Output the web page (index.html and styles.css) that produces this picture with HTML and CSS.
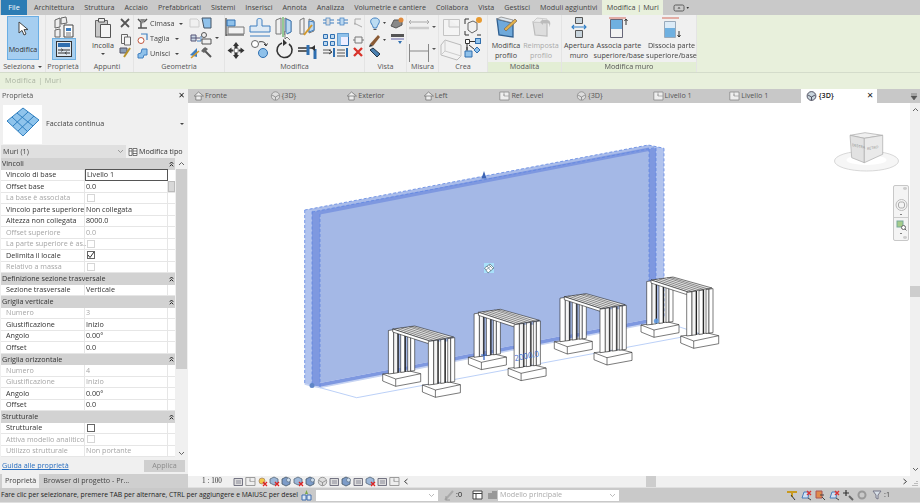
FILE: index.html
```html
<!DOCTYPE html>
<html lang="it">
<head>
<meta charset="utf-8">
<title>Modifica | Muri</title>
<link rel="stylesheet" href="styles.css">
</head>
<body>
<svg class="defs" aria-hidden="true">
  <symbol id="col" viewBox="0 0 5 6"><path d="M.8 2.800 2.500 1 4.200 2.800M.8 5.300 2.500 3.500 4.200 5.300" fill="none" stroke="#222" stroke-width="1"/></symbol>
  <symbol id="home" viewBox="0 0 11 10"><path d="M5.500 1 10.500 5H1.200ZM2.800 5V9H8.200V5" fill="#eee" stroke="#777" stroke-width=".8"/></symbol>
  <symbol id="cube3d" viewBox="0 0 11 10"><circle cx="5.500" cy="5" r="4.200" fill="#ddd" stroke="#888" stroke-width=".8"/><path d="M2 4 5.500 6 9 4M5.500 6V9" fill="none" stroke="#777" stroke-width=".7"/></symbol>
  <symbol id="cube3da" viewBox="0 0 11 10"><circle cx="5.500" cy="5" r="4.400" fill="#c8d4dc" stroke="#445" stroke-width=".9"/><path d="M2 4 5.500 6 9 4M5.500 6V9.400" fill="none" stroke="#334" stroke-width=".8"/></symbol>
  <symbol id="plan" viewBox="0 0 11 10"><path d="M.8 1H10V9H.8Z" fill="#eee" stroke="#888" stroke-width=".8"/><path d="M5 1V5H10M5 5V3" fill="none" stroke="#999" stroke-width=".7"/></symbol>
  <symbol id="vc" viewBox="0 0 11 11"><path d="M1 2.500H9.500V9.500H1Z" fill="#ddd" stroke="#667" stroke-width=".9"/><path d="M3 5H8M3 7H8" stroke="#778" stroke-width=".8"/></symbol>
  <symbol id="vcx" viewBox="0 0 11 11"><path d="M1 3 5 1 9 3V7L5 9 1 7Z" fill="#9db7d8" stroke="#567" stroke-width=".8"/><path d="M6 6 10 10M10 6 6 10" stroke="#d22" stroke-width="1.300"/></symbol>
  <symbol id="vcy" viewBox="0 0 11 11"><circle cx="5" cy="5" r="3" fill="#f2c94c" stroke="#a86" stroke-width=".8"/><path d="M6 6 10 10M10 6 6 10" stroke="#d22" stroke-width="1.300"/></symbol>
  <symbol id="vcb" viewBox="0 0 11 11"><path d="M1 3 5 1 9 3V8L5 10 1 8Z" fill="#7d9cc8" stroke="#456" stroke-width=".8"/><circle cx="7.500" cy="4" r="2" fill="#cde" stroke="#567" stroke-width=".6"/></symbol>
  <symbol id="sf" viewBox="0 0 12 12"><path d="M2 9 4 3H9L8 9Z" fill="#cfe0f3" stroke="#3f74b5" stroke-width=".9"/><path d="M7 2 11 6M11 2 7 6" stroke="#d33" stroke-width="1.400"/><path d="M8 9 11 11" stroke="#444"/></symbol>
</svg>

<header class="menubar">
  <span class="file">File</span>
  <span class="tab">Architettura</span>
  <span class="tab">Struttura</span>
  <span class="tab">Acciaio</span>
  <span class="tab">Prefabbricati</span>
  <span class="tab">Sistemi</span>
  <span class="tab">Inserisci</span>
  <span class="tab">Annota</span>
  <span class="tab">Analizza</span>
  <span class="tab">Volumetrie e cantiere</span>
  <span class="tab">Collabora</span>
  <span class="tab">Vista</span>
  <span class="tab">Gestisci</span>
  <span class="tab">Moduli aggiuntivi</span>
  <span class="tab tab-active">Modifica | Muri</span>
  <svg class="tab-extra" width="20" height="10" viewBox="0 0 20 10"><rect x="1" y="2" width="10" height="6" rx="1.500" fill="none" stroke="#444" stroke-width=".8"/><path d="M4.500 5.500 6 4 7.500 5.500Z" fill="#444"/><path d="M13.500 4H16L14.700 6Z" fill="#333"/></svg>
</header>

<section class="ribbon">
  <div class="panel p-sel">
    <div class="pbody">
      <div class="modbtn">
        <svg width="12" height="16" viewBox="0 0 12 16"><path d="M2 1V12L5 9.400 7 14 9 13 7 8.600H11Z" fill="#fff" stroke="#444" stroke-width="1"/></svg>
        <span>Modifica</span>
      </div>
    </div>
    <div class="plabel">Seleziona <i class="caret"></i></div>
  </div>

  <div class="panel p-prop">
    <div class="pbody">
      <svg width="35" height="47" viewBox="0 0 35 47">
        <path d="M9 5 14 3V12L9 13ZM15 3 20 2 21 8 15 9ZM9 15 14 14V22H9Z" fill="#eee" stroke="#666"/>
        <path d="M18 10H27V22H18Z" fill="#fff" stroke="#444"/><path d="M20 13H25V16H20Z" fill="#3f7fc0"/><path d="M20 18H25M20 20H25" stroke="#555" stroke-width=".8"/>
        <rect x="6.500" y="23.500" width="23" height="21" fill="#a8d0f0" stroke="#6fb0e0"/>
        <rect x="10.500" y="26.500" width="15" height="15" fill="#dfe8f0" stroke="#333"/>
        <rect x="12" y="28" width="12" height="4" fill="#2f6fb0"/>
        <path d="M12 35H24M12 38H24" stroke="#333"/><path d="M15 33.500 17 35 15 36.500M21 36.500 19 38 21 39.500" fill="none" stroke="#333" stroke-width=".7"/>
      </svg>
    </div>
    <div class="plabel">Proprietà</div>
  </div>

  <div class="panel p-app">
    <div class="pbody app-body">
      <div class="paste">
        <svg width="18" height="21" viewBox="0 0 18 21"><path d="M1.500 3.500H13.500V20H1.500Z" fill="#c7c7c7" stroke="#666"/><path d="M4.500 1.500H10.500V5H4.500Z" fill="#eee" stroke="#555"/><path d="M6.500 7.500H16.500V20.500H6.500Z" fill="#f4f4f4" stroke="#555"/></svg>
        <span>Incolla</span>
        <i class="caret"></i>
      </div>
      <svg width="14" height="47" viewBox="0 0 14 47">
        <path d="M3 4 11 12M11 4 3 12" stroke="#555" stroke-width="1.800"/>
        <path d="M3.500 19.500H9.500V28.500H3.500Z" fill="#f4f4f4" stroke="#666"/><path d="M6.500 22H12.500V30H6.500Z" fill="#f4f4f4" stroke="#666"/>
        <path d="M2 33H9V38H2Z" fill="#8a9db5" stroke="#556"/><path d="M12 33 6 42" stroke="#b8932a" stroke-width="2"/>
      </svg>
    </div>
    <div class="plabel">Appunti</div>
  </div>

  <div class="panel p-geo">
    <div class="pbody geo-body">
      <div class="geo-col">
        <div class="geo-row">
          <svg width="11" height="11" viewBox="0 0 11 11"><path d="M1 1 4 4V10M10 1 7 4M1 10H10" fill="none" stroke="#555" stroke-width="1.500"/><path d="M3 1H8L6 6Z" fill="#888"/></svg>
          <span class="w-a">Cimasa</span><i class="caret"></i>
        </div>
        <div class="geo-row">
          <svg width="11" height="11" viewBox="0 0 11 11"><path d="M4 1H10V7" fill="none" stroke="#3f7fc0" stroke-width="1.200"/><circle cx="4" cy="7.500" r="3" fill="#fff" stroke="#c0573f"/></svg>
          <span class="w-b">Taglia</span><i class="caret"></i>
        </div>
        <div class="geo-row">
          <svg width="11" height="11" viewBox="0 0 11 11"><path d="M1 6V10H6L7 7H10V1H5L4 5Z" fill="#8fc1ea" stroke="#3f7fc0"/></svg>
          <span class="w-b">Unisci</span><i class="caret"></i>
        </div>
      </div>
      <svg class="geo-icons" width="36" height="47" viewBox="0 0 36 47">
        <path d="M2 4H9L11 6V12H2Z" fill="#f0f0f0" stroke="#ccc"/><path d="M14 3H23V13H16Z" fill="#8fc1ea" stroke="#456"/>
        <path d="M3 23H12M3 20H8V26H3Z" fill="#ccd9e6" stroke="#557"/><path d="M9 26H13V21" fill="none" stroke="#3f7fc0"/>
        <circle cx="16" cy="20" r="2.500" fill="#eee" stroke="#555"/><path d="M14 24H23V29H14Z" fill="#eee" stroke="#555"/>
        <path d="M2 40 9 33 9 42Z" fill="#3f7fc0"/><path d="M3 43 11 36" stroke="#d59a2b" stroke-width="1.600"/>
        <path d="M15 34 23 42" stroke="#555" stroke-width="2"/><path d="M13 36 17 32 20 34 16 38Z" fill="#666"/>
      </svg>
      <i class="caret geo-caret"></i>
    </div>
    <div class="plabel">Geometria</div>
  </div>

  <div class="panel p-mod">
    <div class="pbody">
      <svg width="140" height="47" viewBox="0 0 140 47">
        <path d="M1 3V21M1 20H19" fill="none" stroke="#444" stroke-width="1.200"/><path d="M2 5H10V11H2Z" fill="#8fc1ea" stroke="#2f6fb0"/><path d="M3 12H19V19H3Z" fill="#f2f2f2" stroke="#777"/>
        <path d="M25 17V11H32V5C32 3 37 3 37 5V11H45V17ZM25 21H45" fill="#dfeaf4" stroke="#3f7fc0"/>
        <path d="M51 5 56 3V19H51ZM60 3 66 6V17L60 20Z" fill="#f0f0f0" stroke="#777"/><path d="M58 2V22" stroke="#3aa23a"/><path d="M61 4 66 6V17L61 19Z" fill="#bcd8f0" stroke="#3f7fc0"/><path d="M60 16V24L62 22 65 25" fill="#fff" stroke="#444" stroke-width=".7"/>
        <path d="M75 5 79 3V19H75ZM84 4 89 6V16L84 18Z" fill="#f0f0f0" stroke="#777"/><path d="M84 6 89 7V15L84 17Z" fill="#bcd8f0" stroke="#3f7fc0"/><path d="M79 20 87 10" stroke="#d59a2b" stroke-width="2"/>
        <path d="M11 27 14 31H12.500V34H9.500V31H8ZM11 44 8 40H9.500V37H12.500V40H14ZM2.500 35.500 6.500 32.500V34.500H8.500V36.500H6.500V38.500ZM19.500 35.500 15.500 38.500V36.500H13.500V34.500H15.500V32.500Z" fill="#333"/><rect x="9.500" y="33.500" width="3.500" height="4" fill="#fff" stroke="#777" stroke-width=".7"/>
        <circle cx="30" cy="29" r="3.500" fill="#fff" stroke="#666"/><circle cx="38" cy="38" r="4.500" fill="#8fc1ea" stroke="#2f6fb0"/><path d="M34 27C37 26 40 27 41 30M39 29 41 31 42.500 28.500" fill="none" stroke="#333"/>
        <path d="M64 29A7.500 7.500 0 1 1 57 28" fill="none" stroke="#333" stroke-width="1.600"/><path d="M58 24V31L62 28Z" fill="#333"/>
        <path d="M73 33H90M73 36H84" stroke="#333" stroke-width="1.300"/><path d="M83 40V30M90 44V34" stroke="#2f6fb0" stroke-width="3"/><path d="M86 33 90 30 90 36Z" fill="#333"/>
        <path d="M98 5H109M98 8H109" stroke="#3f7fc0" stroke-width="1.100"/><rect x="101" y="3" width="4" height="7" fill="#ddd" stroke="#3f7fc0" stroke-width=".7"/>
        <path d="M112 5H123M112 8H123" stroke="#3f7fc0" stroke-width="1.100"/><rect x="115" y="3" width="4" height="7" fill="#bcd8f0" stroke="#3f7fc0" stroke-width=".7"/>
        <path d="M130 4H136M130 4V10M129 8 137 12" fill="none" stroke="#aaa"/>
        <path d="M98.500 19.500H102.500V23.500H98.500ZM105.500 19.500H109.500V23.500H105.500ZM98.500 26.500H102.500V30.500H98.500ZM105.500 26.500H109.500V30.500H105.500Z" fill="#bcd8f0" stroke="#2f6fb0"/>
        <path d="M112.500 18.500H123.500V30.500H112.500Z" fill="#eef" stroke="#2f6fb0"/><path d="M112.500 18.500H123.500V22H116V30.500H112.500Z" fill="#8fc1ea"/>
        <path d="M130 22H137V28H130ZM128 25H130M137 25H139" fill="none" stroke="#777"/>
        <path d="M98 35H106M98 38H106" stroke="#555" stroke-width="1.200"/><path d="M109 33V42" stroke="#2f6fb0" stroke-width="2"/><path d="M104 35 107 37 104 39" fill="none" stroke="#333"/>
        <path d="M112 35H120M112 38H120M112 41H120" stroke="#555" stroke-width="1.200"/><path d="M122 33V42" stroke="#2f6fb0" stroke-width="2"/>
        <path d="M129 33 137 41M137 33 129 41" stroke="#d8322a" stroke-width="2.300"/>
      </svg>
    </div>
    <div class="plabel">Modifica</div>
  </div>

  <div class="panel p-vis">
    <div class="pbody">
      <svg width="42" height="47" viewBox="0 0 42 47">
        <path d="M10 3C6 3 5 6 6 8 7 10 8 11 8.500 13H11.500C12 11 13 10 14 8 15 6 14 3 10 3Z" fill="#bcdcf2" stroke="#3f7fc0"/><path d="M8.500 14.500H11.500" stroke="#555"/><path d="M18 7H21L19.500 9Z" fill="#444"/>
        <path d="M26 11 29 5H37V10L31 13Z" fill="#888" stroke="#555"/><circle cx="36" cy="5" r="2.500" fill="#e08a3c"/>
        <path d="M5 29 13 20 15 22 8 31Z" fill="#8a5a34"/><path d="M5 29 4 32 8 31Z" fill="#333"/><path d="M18 24H21L19.500 26Z" fill="#444"/>
        <path d="M26 19H39V22H26Z" fill="#555"/><path d="M26 23H39V25H26Z" fill="#aac"/><path d="M33 26H37L35 29Z" fill="#2f6fb0"/>
        <path d="M5 35 8 33 15 39 12 42Z" fill="#4a7fb0" stroke="#234"/>
      </svg>
    </div>
    <div class="plabel">Vista</div>
  </div>

  <div class="panel p-mis">
    <div class="pbody">
      <svg width="32" height="47" viewBox="0 0 32 47">
        <path d="M2 7H22M4 5 2 7 4 9M20 5 22 7 20 9" fill="none" stroke="#aaa"/><path d="M2 13H22" stroke="#ccc" stroke-width="2.500"/>
        <path d="M2.500 29V47M21.500 29V47M2 36H22" stroke="#888"/>
        <path d="M25 11H29L27 13ZM25 33H29L27 35Z" fill="#555"/>
      </svg>
    </div>
    <div class="plabel">Misura</div>
  </div>

  <div class="panel p-cre">
    <div class="pbody">
      <svg width="49" height="47" viewBox="0 0 49 47">
        <path d="M4.500 4.500H20.500V20.500H4.500ZM10 4.500V12H20.500" fill="#f4f4f4" stroke="#c4c4c4"/>
        <path d="M26 4V9M26 4H30M42 4H38M26 20V16M26 20H30M42 20H38" fill="none" stroke="#333"/><path d="M29 8 34 6 38 8V15L33 18 29 15Z" fill="#f0f0f0" stroke="#666"/><circle cx="40" cy="5" r="3" fill="#e89a30"/>
        <path d="M2 30 6 25 22 30 22 41 18 45 2 40Z" fill="#f2f2f2" stroke="#bbb"/><path d="M6 25 6 36 22 41M2 40 6 36" fill="none" stroke="#ccc"/>
        <path d="M26.500 24.500H30.500V28.500H26.500ZM28 29V36M31 26.500H36M36.500 23.500H41.500V28.500H36.500Z" fill="#fff" stroke="#333"/><path d="M36.500 23.500H41.500V28.500H36.500Z" fill="#8fc1ea" stroke="#2f6fb0"/>
        <path d="M26 36H33V42H26Z" fill="#8fc1ea" stroke="#2f6fb0"/><path d="M38 32 41 35 38 38 35 35Z" fill="#8fc1ea" stroke="#2f6fb0"/><path d="M30 30 35 34M28 32V35" stroke="#333"/>
      </svg>
    </div>
    <div class="plabel">Crea</div>
  </div>

  <div class="panel p-mdl">
    <div class="pbody big-row">
      <div class="big b-modp">
        <svg width="24" height="23" viewBox="0 0 24 23"><path d="M3 3 19 7V21L5 19Z" fill="#6fa9da" stroke="#2f5f90" stroke-width="1.300"/><path d="M3 3 7 1 19 4 19 7Z" fill="#dfe8f0" stroke="#777" stroke-width=".7"/><path d="M10 13 21 3 23 5 12 15Z" fill="#e2b04a" stroke="#765" stroke-width=".7"/></svg>
        <span>Modifica<br>profilo</span>
      </div>
      <div class="big b-resp">
        <svg width="24" height="23" viewBox="0 0 24 23"><path d="M4 6 18 7V20L6 19Z" fill="#ddd" stroke="#bbb" stroke-width="1.200"/><path d="M4 6 8 2 18 3V7Z" fill="#eaeaea" stroke="#ccc"/><path d="M14 3 11 6 14 9V7H18C20 7 21 9 20 11 22 9 22 4 18 4H14Z" fill="#bbb"/></svg>
        <span>Reimposta<br>profilo</span>
      </div>
    </div>
    <div class="plabel">Modalità</div>
  </div>

  <div class="panel p-mur">
    <div class="pbody big-row">
      <div class="big b-ape">
        <svg width="24" height="23" viewBox="0 0 24 23"><path d="M8.500 1.500H15.500V7.500H8.500ZM8.500 14.500H15.500V21.500H8.500Z" fill="#c8d4dc" stroke="#555"/><path d="M5 11H19M7 9 5 11 7 13M17 9 19 11 17 13" fill="none" stroke="#2f7fc8" stroke-width="1.100"/></svg>
        <span>Apertura<br>muro</span>
      </div>
      <div class="big b-ass">
        <svg width="24" height="23" viewBox="0 0 24 23"><path d="M2 2H19" stroke="#d46a5a"/><path d="M3.500 3.500H15.500V21.500H3.500Z" fill="#f2f2f2" stroke="#667"/><path d="M4 4H15V13H4Z" fill="#6fb0e0"/><path d="M19 9V3M17.500 5 19 3 20.500 5" fill="none" stroke="#333"/></svg>
        <span>Associa parte<br>superiore/base</span>
      </div>
      <div class="big b-dis">
        <svg width="24" height="23" viewBox="0 0 24 23"><path d="M2 2H19" stroke="#d46a5a"/><path d="M4.500 5.500H15.500V21.500H4.500Z" fill="#dcebf7" stroke="#9ab"/><path d="M5 12H15V21H5Z" fill="#6fb0e0"/><path d="M19 15V21M17.500 19 19 21 20.500 19" fill="none" stroke="#333"/></svg>
        <span>Dissocia parte<br>superiore/base</span>
      </div>
    </div>
    <div class="plabel">Modifica muro</div>
  </div>
</section>

<div class="context">Modifica | Muri</div>

<main class="workspace">
  <aside class="side">
    <div class="side-title"><span>Proprietà</span><span class="x">✕</span></div>
    <div class="typesel">
      <div class="thumb">
        <svg width="38" height="38" viewBox="0 0 38 38">
          <path d="M3 16 19 3 35 15 19 31Z" fill="#8fc4ec" stroke="#2f7fc0"/>
          <path d="M8 12 24 27M13 8 29 21M9 21 24 7M14 26 30 11" stroke="#2f7fc0" fill="none"/>
        </svg>
      </div>
      <span class="typename">Facciata continua</span>
      <i class="caret type-caret"></i>
    </div>
    <div class="instance">
      <div class="combo"><span>Muri (1)</span><svg width="7" height="5" viewBox="0 0 7 5"><path d="M1 1 3.500 3.500 6 1" fill="none" stroke="#888" stroke-width=".8"/></svg></div>
      <div class="edit">
        <svg width="10" height="10" viewBox="0 0 10 10"><path d="M1 1.500H4V8.500H1ZM5 1.500H9V8.500H5ZM5 4H9M5 6.500H9M1 4H4" fill="#fff" stroke="#555" stroke-width=".8"/></svg>
        <span>Modifica tipo</span>
      </div>
    </div>
    <div class="gridwrap">
      <div class="pgrid">
        <div class="gh"><span>Vincoli</span><svg class="colx"><use href="#col"/></svg></div>
        <div class="gr"><span class="k">Vincolo di base</span><span class="v editing">Livello 1</span><span class="sb"></span></div>
        <div class="gr"><span class="k">Offset base</span><span class="v">0.0</span><span class="sb sb-on"></span></div>
        <div class="gr off"><span class="k">La base è associata</span><span class="v"><i class="chk"></i></span><span class="sb"></span></div>
        <div class="gr"><span class="k">Vincolo parte superiore</span><span class="v">Non collegata</span><span class="sb"></span></div>
        <div class="gr"><span class="k">Altezza non collegata</span><span class="v">8000.0</span><span class="sb"></span></div>
        <div class="gr off"><span class="k">Offset superiore</span><span class="v">0.0</span><span class="sb"></span></div>
        <div class="gr off"><span class="k">La parte superiore è as...</span><span class="v"><i class="chk"></i></span><span class="sb"></span></div>
        <div class="gr"><span class="k">Delimita il locale</span><span class="v"><i class="chk"><svg width="8" height="8" viewBox="0 0 8 8"><path d="M1 4 3 6.500 7 1" fill="none" stroke="#333"/></svg></i></span><span class="sb"></span></div>
        <div class="gr off"><span class="k">Relativo a massa</span><span class="v"><i class="chk"></i></span><span class="sb"></span></div>
        <div class="gh"><span>Definizione sezione trasversale</span><svg class="colx"><use href="#col"/></svg></div>
        <div class="gr"><span class="k">Sezione trasversale</span><span class="v">Verticale</span><span class="sb"></span></div>
        <div class="gh"><span>Griglia verticale</span><svg class="colx"><use href="#col"/></svg></div>
        <div class="gr off"><span class="k">Numero</span><span class="v">3</span><span class="sb"></span></div>
        <div class="gr"><span class="k">Giustificazione</span><span class="v">Inizio</span><span class="sb"></span></div>
        <div class="gr"><span class="k">Angolo</span><span class="v">0.00°</span><span class="sb"></span></div>
        <div class="gr"><span class="k">Offset</span><span class="v">0.0</span><span class="sb"></span></div>
        <div class="gh"><span>Griglia orizzontale</span><svg class="colx"><use href="#col"/></svg></div>
        <div class="gr off"><span class="k">Numero</span><span class="v">4</span><span class="sb"></span></div>
        <div class="gr off"><span class="k">Giustificazione</span><span class="v">Inizio</span><span class="sb"></span></div>
        <div class="gr"><span class="k">Angolo</span><span class="v">0.00°</span><span class="sb"></span></div>
        <div class="gr"><span class="k">Offset</span><span class="v">0.0</span><span class="sb"></span></div>
        <div class="gh"><span>Strutturale</span><svg class="colx"><use href="#col"/></svg></div>
        <div class="gr"><span class="k">Strutturale</span><span class="v"><i class="chk chk-dark"></i></span><span class="sb"></span></div>
        <div class="gr off"><span class="k">Attiva modello analitico</span><span class="v"><i class="chk"></i></span><span class="sb"></span></div>
        <div class="gr off"><span class="k">Utilizzo strutturale</span><span class="v">Non portante</span><span class="sb"></span></div>
      </div>
      <div class="pscroll">
        <svg width="7" height="5" viewBox="0 0 7 5"><path d="M1 4 3.500 1.500 6 4" fill="none" stroke="#666"/></svg>
        <div class="pthumb"></div>
        <svg class="pdown" width="7" height="5" viewBox="0 0 7 5"><path d="M1 1 3.500 3.500 6 1" fill="none" stroke="#666"/></svg>
      </div>
    </div>
    <div class="applyrow"><a class="help">Guida alle proprietà</a><span class="apply">Applica</span></div>
    <div class="sidetabs"><span class="st st-on">Proprietà</span><span class="st">Browser di progetto - Pr...</span></div>
  </aside>

  <div class="right">
    <nav class="doctabs">
      <span class="dt"><svg class="dti"><use href="#home"/></svg>Fronte</span>
      <span class="dt"><svg class="dti"><use href="#cube3d"/></svg>{3D}</span>
      <span class="dt"><svg class="dti"><use href="#home"/></svg>Exterior</span>
      <span class="dt"><svg class="dti"><use href="#home"/></svg>Left</span>
      <span class="dt"><svg class="dti"><use href="#plan"/></svg>Ref. Level</span>
      <span class="dt"><svg class="dti"><use href="#cube3d"/></svg>{3D}</span>
      <span class="dt"><svg class="dti"><use href="#plan"/></svg>Livello 1</span>
      <span class="dt"><svg class="dti"><use href="#plan"/></svg>Livello 1</span>
      <span class="dt dt-on"><svg class="dti"><use href="#cube3da"/></svg><b>{3D}</b><span class="x">✕</span></span>
      <svg class="dt-menu" width="8" height="8" viewBox="0 0 8 8"><path d="M1 1H7M1 3H7L4 7Z" fill="#555" stroke="#555" stroke-width=".6"/></svg>
    </nav>
    <div class="viewrow">
      <div class="view">
        <svg class="scene" width="722" height="374" viewBox="188 102 722 374">
          <defs>
            <g id="foot">
              <path d="M0 48V55L13 60.300 38 55.700V47.700L27 45Z" fill="#fff" stroke="#222" stroke-width=".6"/>
              <path d="M0 48 13 53 38 47.700M13 53V60.300" fill="none" stroke="#222" stroke-width=".6"/>
            </g>
            <g id="legs" stroke="#222" stroke-width=".6">
              <path d="M5.700 4.500 11 3.700V47.300L5.700 48Z" fill="#fff"/>
              <path d="M11 3.700 15 3.100V46.800L11 47.300Z" fill="#f4f4f4"/>
              <path d="M18 2.700 22 2.100V45.900L18 46.400Z" fill="#fff"/>
              <path d="M25 1.600 28 1.200V45.100L25 45.500Z" fill="#f6f6f6"/>
              <path d="M28 1.200 32 .600V44.600L28 45.100Z" fill="#fff"/>
              <path d="M15.500 3V46.700M22.600 2V45.800" stroke-width="1.100"/>
            </g>
            <g id="bench">
              <use href="#foot"/>
              <use href="#legs"/>
              <path d="M10 3 32 0 71 11 47 15Z" fill="#ececec" stroke="#222" stroke-width=".6"/>
              <path d="M14 2.400 51 14.400M18 1.900 55 13.800M22 1.400 59 13.200M26 .800 63 12.600M29 .400 67 12" stroke="#444" stroke-width=".6"/>
              <path d="M10 3 47 15V18L10 6Z" fill="#fff" stroke="#222" stroke-width=".6"/>
              <use href="#foot" transform="translate(39.700 11)"/>
              <path d="M45.700 15.500H71.700V55H45.700Z" fill="#fff"/>
              <use href="#legs" transform="translate(40 11)"/>
            </g>
          </defs>
          <path d="M320 212.300 649 148V318L320 382Z" fill="#a4b8e6"/>
          <path d="M304.700 209 648.300 144 664 147.300 649 149 320 213Z" fill="#a9bcea"/>
          <path d="M312 211 649 146.500 649 150 320 213.500Z" fill="#7e98e0"/>
          <path d="M304.700 209H312V385L304.700 383Z" fill="#b1c3ee"/>
          <path d="M312 210.500 320 212.300V386L312 385Z" fill="#7e98e0"/>
          <path d="M649 148 656 147V320L649 322Z" fill="#7e98e0"/>
          <path d="M656 146.500 664 147.300V315.500L656 320Z" fill="#b1c3ee"/>
          <path d="M320 382 649 318V322.500L320 386.500Z" fill="#7e98e0"/>
          <path d="M304.700 383 312 385 320 386.500 649 322.500 656 320 664 315.500" fill="none" stroke="#c6d3f2" stroke-width="1.500"/>
          <path d="M304.700 209V383M312 210.500V385M320 213V386M649 148V322M656 147V320M664 147.300V316M304.700 209 648.300 144 664 147.300M312 211 656 146.500" fill="none" stroke="#5f86e2" stroke-width=".8" stroke-dasharray="3 2"/>
          <path d="M320 386.700 356.700 396.700 700 332.700 676.700 325" fill="none" stroke="#a9c4f5" stroke-width=".8"/>
          <use href="#bench" x="382.700" y="325"/>
          <use href="#bench" x="468.400" y="308.300"/>
          <use href="#bench" x="554.300" y="292.700"/>
          <use href="#bench" x="641" y="276"/>
          <circle cx="312" cy="384.500" r="2.500" fill="#5f86c8"/>
          <circle cx="656.300" cy="320" r="2.500" fill="#5f9ae0" opacity=".9"/>
          <path d="M481.500 177.500 484 170 486.500 177.500Z" fill="#3c64b4"/>
          <path d="M481 354H487M484 354V359" stroke="#2f5fc0" stroke-width="1.200"/>
          <text class="dim" x="515" y="360" transform="rotate(-11 515 360)">2000.0</text>
          <rect x="484" y="262" width="10" height="10" fill="#a8e0fa"/>
          <path d="M484.500 267 490 263 494 267 488 272Z" fill="#fff" stroke="#356" stroke-width=".6"/>
          <path d="M487 265 491 270M489 264 493 268M486 269 491 265" stroke="#356" stroke-width=".5"/>
          <g class="cube">
            <ellipse cx="866.500" cy="160" rx="32" ry="10" fill="#f6f6f6" stroke="#d8d8d8"/>
            <ellipse cx="866.500" cy="159" rx="20" ry="5" fill="#fff"/>
            <path d="M850 134.300 865 131.700 882.700 134.300 864.300 137.300Z" fill="#f0f0f0" stroke="#aaa" stroke-width=".7"/>
            <path d="M850 134.300 864.300 137.300V161.700L851.700 156.700Z" fill="#e2e2e2" stroke="#aaa" stroke-width=".7"/>
            <path d="M864.300 137.300 882.700 134.300V153.300L864.300 161.700Z" fill="#eaeaea" stroke="#aaa" stroke-width=".7"/>
            <text class="cubetxt" transform="translate(852 145) skewY(12)">DESTRA</text>
            <text class="cubetxt" transform="translate(867 149) skewY(-10)">RETRO</text>
          </g>
        </svg>
        <div class="navbar">
          <i class="nb-pin"></i>
          <svg width="13" height="14" viewBox="0 0 13 14"><circle cx="6.500" cy="7" r="5.500" fill="none" stroke="#bbb"/><rect x="3.500" y="4" width="6" height="6" rx="2" fill="none" stroke="#aaa"/></svg>
          <i class="nb-dot"></i>
          <i class="nb-sep"></i>
          <svg width="11" height="11" viewBox="0 0 11 11"><rect x="1" y="1" width="6" height="6" fill="#a6cc8a" stroke="#7a9"/><circle cx="7.500" cy="7.500" r="2" fill="#fff" stroke="#666"/><path d="M9 9 10.500 10.500" stroke="#666"/></svg>
          <i class="nb-dot"></i>
          <i class="nb-pin"></i>
        </div>
      </div>
      <div class="vscroll">
        <svg width="7" height="5" viewBox="0 0 7 5"><path d="M1 4 3.500 1.500 6 4" fill="none" stroke="#666"/></svg>
        <div class="vthumb"></div>
        <svg width="7" height="5" viewBox="0 0 7 5"><path d="M1 1 3.500 3.500 6 1" fill="none" stroke="#666"/></svg>
      </div>
    </div>
    <div class="viewctl">
      <span class="scale">1 : 100</span>
      <div class="vctl">
        <svg class="vci"><use href="#vc"/></svg><svg class="vci"><use href="#plan"/></svg><svg class="vci"><use href="#vcy"/></svg><svg class="vci"><use href="#vcx"/></svg><svg class="vci"><use href="#vcb"/></svg><svg class="vci"><use href="#vcx"/></svg><svg class="vci"><use href="#vcb"/></svg><svg class="vci"><use href="#cube3d"/></svg><svg class="vci"><use href="#vc"/></svg><svg class="vci"><use href="#vcb"/></svg><svg class="vci"><use href="#vc"/></svg><svg class="vci"><use href="#vcx"/></svg><svg class="vci"><use href="#vc"/></svg><svg class="vci"><use href="#plan"/></svg>
      </div>
      <svg class="chev" width="6" height="7" viewBox="0 0 6 7"><path d="M4.500 1 1.500 3.500 4.500 6" fill="none" stroke="#444"/></svg>
      <div class="hscroll"><div class="hthumb"></div></div>
      <svg class="chev" width="6" height="7" viewBox="0 0 6 7"><path d="M1.500 1 4.500 3.500 1.500 6" fill="none" stroke="#444"/></svg>
      <svg class="grip" width="6" height="6" viewBox="0 0 6 6"><path d="M5 1V2M3 3V4M5 3V4M1 5V6M3 5V6M5 5V6" stroke="#888"/></svg>
    </div>
  </div>
</main>

<footer class="status">
  <span class="msg">Fare clic per selezionare, premere TAB per alternare, CTRL per aggiungere e MAIUSC per desel</span>
  <svg class="s-ico" width="11" height="12" viewBox="0 0 11 12"><path d="M1 6H5V11H1ZM6 6H10V11H6Z" fill="#dbe6f2" stroke="#3f6fb0"/><path d="M5.500 1 7 5H4Z" fill="#7aa646"/></svg>
  <div class="s-combo s1"><svg width="7" height="5" viewBox="0 0 7 5"><path d="M1 1 3.500 3.500 6 1" fill="none" stroke="#aaa" stroke-width=".8"/></svg></div>
  <svg class="s-ico2" width="11" height="12" viewBox="0 0 11 12"><path d="M1 11 9 2" stroke="#aaa" stroke-width="2"/><path d="M2 7V11H6" fill="none" stroke="#999"/></svg>
  <span class="zero">:0</span>
  <svg class="s-ico3" width="11" height="10" viewBox="0 0 11 10"><path d="M1 1H10V9H1ZM1 3.500H10M4 3.500V9" fill="#fff" stroke="#444"/></svg>
  <svg class="s-ico4" width="11" height="10" viewBox="0 0 11 10"><path d="M1 3H5V9H1ZM5 1H10V9H5Z" fill="#999"/></svg>
  <div class="s-combo s2"><span>Modello principale</span><svg width="7" height="5" viewBox="0 0 7 5"><path d="M1 1 3.500 3.500 6 1" fill="none" stroke="#aaa" stroke-width=".8"/></svg></div>
  <div class="s-right">
    <svg class="sri" viewBox="0 0 12 12"><path d="M1 3H11M6 3V8" stroke="#c99a1f" stroke-width="2"/><path d="M5 6 9 11" stroke="#333"/></svg>
    <svg class="sri"><use href="#sf"/></svg>
    <svg class="sri" viewBox="0 0 12 12"><path d="M2 2H8V9H2Z" fill="#e08a4c" stroke="#a55"/><path d="M8 8 11 11M6 6 10 6" stroke="#444"/></svg>
    <svg class="sri"><use href="#sf"/></svg>
    <svg class="sri" viewBox="0 0 12 12"><path d="M4 1V7M1 4H7" stroke="#333" stroke-width="1.200"/><path d="M7 7 11 11" stroke="#666" stroke-width="2"/></svg>
    <svg class="sri" viewBox="0 0 12 12"><circle cx="6" cy="6" r="3.500" fill="none" stroke="#999" stroke-width="2"/></svg>
    <svg class="sri-f" width="10" height="10" viewBox="0 0 10 10"><path d="M1 1H9L6 5V9L4 8V5Z" fill="#d8e0e8" stroke="#778"/></svg><span class="fcount">:1</span>
  </div>
</footer>
</body>
</html>
```

FILE: styles.css
```css
* { box-sizing: border-box; }
html, body { margin: 0; padding: 0; }
body {
  width: 920px;
  height: 503px;
  overflow: hidden;
  font-family: "Open Sans", "Noto Sans", "Liberation Sans", sans-serif;
  font-size: 7.200px;
  line-height: 1;
  color: #3c3c3c;
  background: #f0f0f0;
  display: flex;
  flex-direction: column;
  filter: blur(.25px);
}
.defs { position: absolute; width: 0; height: 0; }
svg { display: block; flex: none; }
.caret { display: inline-block; width: 0; height: 0; border: 2px solid transparent; border-top: 2.500px solid #444; border-bottom: 0; vertical-align: middle; }

.menubar { height: 15px; background: #c9c9c9; display: flex; align-items: stretch; padding-left: 1px; flex: none; }
.file { width: 26px; background: #2c7cb4; color: #fff; display: flex; align-items: center; justify-content: center; margin-right: 2px; }
.tab { display: flex; align-items: center; padding: 0 5px; color: #444; white-space: nowrap; }
.tab-active { background: #e8f0dc; padding: 0 4.500px; }
.tab-extra { align-self: center; margin-left: 10px; }

.ribbon { height: 58px; flex: none; display: flex; background: #e8f0dc; border-bottom: 1px solid #d4dccb; }
.panel { display: flex; flex-direction: column; flex: none; border-right: 1px solid #e4e4e4; background: #f0f0f0; }
.pbody { height: 47px; flex: none; }
.plabel { flex: 1; display: flex; align-items: center; justify-content: center; gap: 3px; color: #555; }
.p-sel { width: 46px; }
.p-prop { width: 35px; }
.p-app { width: 53px; }
.p-geo { width: 91px; }
.p-mod { width: 140px; }
.p-vis { width: 42px; }
.p-mis { width: 32px; }
.p-cre { width: 49px; }
.p-mdl { width: 74px; }
.p-mur { width: 135px; }
.p-mdl .plabel, .p-mur .plabel { background: #e3eed5; }

.modbtn { margin: 1px 0 0 7px; width: 32px; height: 44px; background: #a6cef0; border: 1px solid #6aaee4; display: flex; flex-direction: column; align-items: center; justify-content: space-between; padding: 4px 0 6px; color: #333; }
.app-body { display: flex; padding-left: 12px; gap: 5px; }
.paste { width: 20px; display: flex; flex-direction: column; align-items: center; padding-top: 2px; gap: 4px; }
.paste span { white-space: nowrap; }
.geo-body { display: flex; position: relative; padding-left: 3px; }
.geo-col { width: 53px; display: flex; flex-direction: column; padding-top: 3px; gap: 4px; }
.geo-row { display: flex; align-items: center; gap: 2px; height: 11px; white-space: nowrap; color: #444; }
.w-a { width: 27px; }
.w-b { width: 23px; }
.geo-icons { margin-left: 1px; }
.geo-caret { position: absolute; left: 81px; top: 22px; }

.big-row { display: flex; }
.big { display: flex; flex-direction: column; align-items: center; padding-top: 1px; line-height: 10px; text-align: center; white-space: nowrap; color: #444; flex: none; }
.big svg { margin-bottom: 1px; }
.b-modp { width: 36px; }
.b-resp { width: 34px; color: #aaa; }
.b-ape { width: 34px; }
.b-ass { width: 46px; }
.b-dis { width: 53px; padding-left: 6px; }

.context { height: 16px; flex: none; background: #e8f0dc; color: #aab3a2; padding: 4px 0 0 5px; letter-spacing: .3px; }

.workspace { flex: 1; display: flex; min-height: 0; }
.side { width: 188px; flex: none; display: flex; flex-direction: column; background: #f0f0f0; }
.side-title { height: 14px; flex: none; display: flex; justify-content: space-between; align-items: center; padding: 0 3px 0 2px; color: #555; }
.x { font-size: 8px; color: #222; font-weight: 700; font-family: "DejaVu Sans", sans-serif; }
.typesel { height: 42px; flex: none; display: flex; align-items: center; padding-left: 3px; position: relative; }
.thumb { width: 39px; height: 39px; background: #fff; display: flex; align-items: center; justify-content: center; }
.typename { margin-left: 4px; color: #444; }
.type-caret { position: absolute; left: 180px; top: 20px; }
.instance { height: 13px; flex: none; display: flex; align-items: center; padding-left: 1px; }
.combo { width: 125px; height: 13px; background: #e0e0e0; display: flex; align-items: center; justify-content: space-between; padding: 0 2px; color: #444; }
.edit { display: flex; align-items: center; gap: 1px; margin-left: 2px; color: #333; white-space: nowrap; }
.gridwrap { height: 300px; flex: none; display: flex; padding-left: 1px; }
.pgrid { width: 174px; flex: none; }
.gh { height: 11.500px; background: #d2d2d2; display: flex; justify-content: space-between; align-items: center; padding: 0 1px 0 1px; color: #333; }
.colx { width: 5px; height: 6px; }
.gr { height: 11.500px; display: grid; grid-template-columns: 84px 83px 7px; background: #fff; border-bottom: 1px solid #e6e6e6; }
.k { padding-left: 5px; display: flex; align-items: center; border-right: 1px solid #e6e6e6; white-space: nowrap; color: #333; overflow: visible; }
.v { padding-left: 1px; display: flex; align-items: center; border-right: 1px solid #e6e6e6; color: #333; }
.sb { background: #fff; }
.sb-on { background: #d8d8d8; border: 1px solid #bbb; }
.editing { border: 1px solid #555; margin-top: -1px; height: 12px; background: #fff; }
.off .k, .off .v { color: #a6a6a6; }
.chk { width: 8px; height: 8px; border: 1px solid #d6d6d6; background: #fff; margin-left: 1px; display: flex; align-items: center; justify-content: center; }
.gr:not(.off) .chk { border-color: #666; }
.pscroll { width: 13px; flex: none; display: flex; flex-direction: column; align-items: center; padding-top: 3px; }
.pthumb { width: 11px; height: 200px; background: #cdcdcd; margin-top: 3px; }
.pdown { margin-top: auto; margin-bottom: 2px; }
.applyrow { height: 16px; flex: none; display: flex; align-items: center; justify-content: space-between; padding: 0 3px 0 2px; }
.help { color: #2a6fc0; text-decoration: underline; }
.apply { width: 41px; height: 12px; background: #cfcfcf; color: #8c8c8c; display: flex; align-items: center; justify-content: center; }
.sidetabs { flex: 1; display: flex; background: #cfcfcf; padding-left: 2px; }
.st { display: flex; align-items: center; padding: 0 4px; color: #444; white-space: nowrap; }
.st-on { background: #f0f0f0; padding: 0 3px; }

.right { flex: 1; min-width: 0; display: flex; flex-direction: column; background: #fff; }
.doctabs { height: 14px; flex: none; display: flex; align-items: center; background: #c8c8c8; position: relative; }
.dt { width: 76.600px; height: 14px; display: flex; align-items: center; padding-left: 5px; gap: 1px; color: #555; white-space: nowrap; flex: none; }
.dti { width: 11px; height: 10px; }
.dt-on { background: #fff; color: #222; position: relative; }
.dt-on b { font-weight: 600; margin-left: 1px; }
.dt-on .x { position: absolute; right: 4px; top: 3px; }
.dt-menu { position: absolute; right: 2px; top: 4px; }
.viewrow { flex: 1; min-height: 0; display: flex; }
.view { width: 722px; flex: none; position: relative; background: #fff; overflow: hidden; }
.dim { font-size: 8px; fill: #3f6fd0; }
.cubetxt { font-size: 3.600px; fill: #888; }
.navbar { position: absolute; left: 705px; top: 82px; width: 16px; height: 56px; background: #f4f4f4; border: 1px solid #c8c8c8; border-radius: 2px; display: flex; flex-direction: column; align-items: center; padding: 1px 0; gap: 2px; }
.nb-pin { width: 4px; height: 4px; border-radius: 50%; background: #ccc; align-self: flex-end; margin-right: 1px; }
.nb-pin:last-child { margin-top: auto; }
.nb-dot { width: 2px; height: 2px; background: #666; border-radius: 50%; }
.nb-sep { width: 14px; height: 1px; background: #ccc; }
.navbar svg:first-of-type { margin-top: 6px; }
.vscroll { width: 10px; flex: none; background: #f0f0f0; display: flex; flex-direction: column; align-items: center; justify-content: space-between; padding: 4px 0; position: relative; }
.vthumb { position: absolute; left: 0; top: 183px; width: 10px; height: 11px; background: #cdcdcd; }
.viewctl { height: 12px; flex: none; background: #f0f0f0; display: flex; align-items: center; border-bottom: 1px solid #e0e0e0; }
.scale { margin-left: 14px; width: 31px; color: #333; font-family: "Liberation Serif", serif; }
.vctl { display: flex; gap: 1px; }
.vci { width: 11px; height: 11px; }
.chev { margin-left: 3px; }
.hscroll { flex: 1; position: relative; height: 11px; }
.hthumb { position: absolute; left: 237px; top: 0; width: 10px; height: 11px; background: #cdcdcd; }
.grip { margin: 3px 2px 0 4px; }

.status { height: 15px; flex: none; background: #c9c9c9; border-bottom: 1px solid #e0e0e0; display: flex; align-items: center; }
.msg { width: 301px; white-space: nowrap; padding-left: 1px; color: #222; font-size: 6.800px; }
.s-ico { margin-right: 4px; }
.s-combo { height: 11px; background: #fff; display: flex; align-items: center; justify-content: space-between; padding: 0 3px 0 2px; color: #aaa; }
.s1 { width: 122px; justify-content: flex-end; }
.s2 { width: 121px; }
.s-ico2 { margin-left: 6px; }
.zero { margin-left: 1px; width: 14px; color: #222; }
.s-ico3 { margin-left: 2px; }
.s-ico4 { margin-left: 4px; }
.s-right { margin-left: 167px; display: flex; align-items: center; gap: 2px; }
.sri { width: 12px; height: 12px; }
.sri-f { margin-left: 2px; }
.fcount { color: #444; }
```
